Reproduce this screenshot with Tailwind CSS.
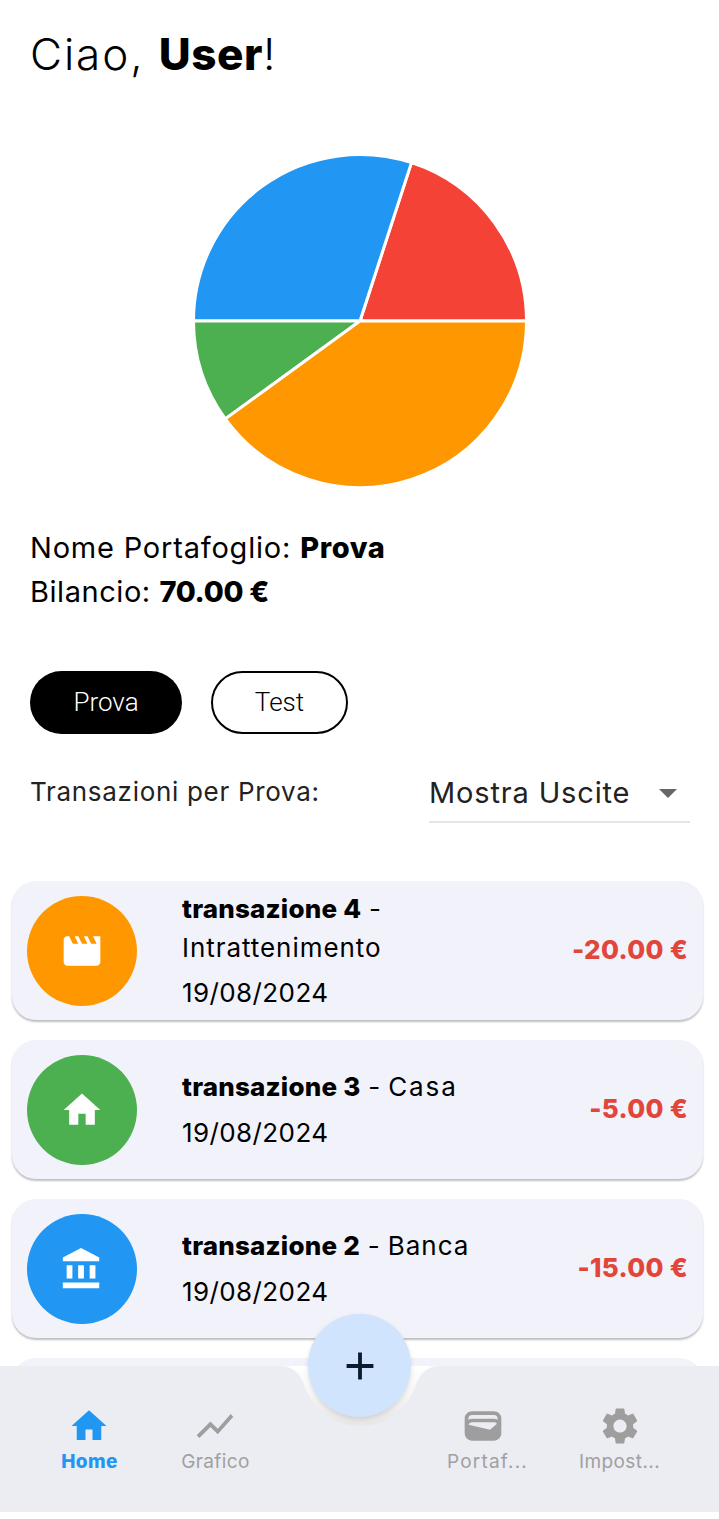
<!DOCTYPE html>
<html lang="en">
<head>
  <meta charset="UTF-8" />
  <title>Ciao, User</title>
  <script src="https://cdn.jsdelivr.net/npm/@tailwindcss/browser@4"></script>
</head>
<body class="bg-white">
  <div class="relative h-[1519px] w-[719px] overflow-hidden bg-white font-['Inter',sans-serif] text-black">
    <div class="px-[30px] pt-[26px]">
      <h1 class="h-[56px] text-[44px] leading-[56px] font-light tracking-[1.9px]">Ciao, <b class="font-extrabold tracking-[0.5px]">User</b>!</h1>
    </div>

    <!-- Pie -->
    <div class="mt-[69px] flex justify-center">
      <svg width="340" height="340" viewBox="-170 -170 340 340">
        <g stroke="#fff" stroke-width="3" stroke-linejoin="round">
          <path fill="#f44336" d="M0 0L166.500 0A166.500 166.500 0 0 0 51.450 -158.350Z" />
          <path fill="#2196f3" d="M0 0L51.450 -158.350A166.500 166.500 0 0 0 -166.500 0Z" />
          <path fill="#4caf50" d="M0 0L-166.500 0A166.500 166.500 0 0 0 -134.700 97.900Z" />
          <path fill="#ff9800" d="M0 0L-134.700 97.900A166.500 166.500 0 0 0 166.500 0Z" />
        </g>
      </svg>
    </div>

    <!-- Wallet info -->
    <div class="mt-[35px] px-[30px] text-[29px] leading-[44px]">
      <p class="tracking-[0.8px]">Nome Portafoglio: <b class="font-extrabold tracking-[0.6px]">Prova</b></p>
      <p class="tracking-[0.55px]">Bilancio: <b class="font-extrabold tracking-[-0.3px]">70.00 €</b></p>
    </div>

    <!-- Wallet chips -->
    <div class="mt-[57px] flex gap-[29px] px-[30px] font-['Roboto',sans-serif] text-[26px] font-light">
      <div class="flex h-[63px] w-[152px] items-center justify-center rounded-full bg-black text-white">Prova</div>
      <div class="flex h-[63px] w-[137px] items-center justify-center rounded-full border-2 border-black">Test</div>
    </div>

    <!-- Filter -->
    <div class="mt-[31px] flex items-start justify-between pl-[30px] pr-[29px]">
      <span class="text-[26px] leading-[54px] tracking-[0.7px] text-[#222]">Transazioni per Prova:</span>
      <div class="flex h-[58px] w-[261px] items-center justify-between border-b-2 border-[#e5e5e5] pr-[13px]">
        <span class="text-[29px] tracking-[0.85px] text-[#222]">Mostra Uscite</span>
        <svg width="18" height="9" viewBox="0 0 20 10"><path fill="#666" d="M0 0h20L10 10z" /></svg>
      </div>
    </div>

    <!-- Transactions -->
    <div class="mt-[58px] flex flex-col gap-[20px] pl-[12px] pr-[16px]">
      <div class="flex h-[139px] items-center rounded-[24px] bg-[#f1f2fa] pl-[15px] pr-[15px] shadow-[0_2px_2px_rgba(0,0,0,0.25)]">
        <div class="flex h-[110px] w-[110px] shrink-0 items-center justify-center rounded-full bg-[#ff9800]">
          <svg width="44" height="44" viewBox="0 0 24 24" fill="#fff"><path d="M18 4l2 4h-3l-2-4h-2l2 4h-3l-2-4H8l2 4H7L5 4H4c-1.100 0-1.990.9-1.990 2L2 18c0 1.100.9 2 2 2h16c1.100 0 2-.9 2-2V4h-4z" /></svg>
        </div>
        <div class="ml-[45px] mb-[1px] text-[26px] leading-[39px] tracking-[0.4px]">
          <p><b class="font-extrabold tracking-[0.2px]">transazione 4</b> -<br /><span class="tracking-[0.95px]">Intrattenimento</span></p>
          <p class="mt-[6px]">19/08/2024</p>
        </div>
        <span class="ml-auto mb-[3px] text-[26px] font-extrabold tracking-[0.3px] text-[#e2453a]">-20.00 €</span>
      </div>

      <div class="flex h-[139px] items-center rounded-[24px] bg-[#f1f2fa] pl-[15px] pr-[15px] shadow-[0_2px_2px_rgba(0,0,0,0.25)]">
        <div class="flex h-[110px] w-[110px] shrink-0 items-center justify-center rounded-full bg-[#4caf50]">
          <svg width="44" height="44" viewBox="0 0 24 24" fill="#fff"><path d="M10 20v-6h4v6h5v-8h3L12 3 2 12h3v8z" /></svg>
        </div>
        <div class="ml-[45px] text-[26px] leading-[40px] tracking-[0.4px]">
          <p><b class="font-extrabold tracking-[0.2px]">transazione 3</b> - <span class="tracking-[1.900px]">Casa</span></p>
          <p class="mt-[6px]">19/08/2024</p>
        </div>
        <span class="ml-auto mb-[3px] text-[26px] font-extrabold tracking-[0.3px] text-[#e2453a]">-5.00 €</span>
      </div>

      <div class="flex h-[139px] items-center rounded-[24px] bg-[#f1f2fa] pl-[15px] pr-[15px] shadow-[0_2px_2px_rgba(0,0,0,0.25)]">
        <div class="flex h-[110px] w-[110px] shrink-0 items-center justify-center rounded-full bg-[#2196f3]">
          <svg width="46" height="46" viewBox="0 0 24 24" fill="#fff"><path d="M4 10v7h3v-7H4zm6 0v7h3v-7h-3zM2 22h19v-3H2v3zm14-12v7h3v-7h-3zm-4.500-9L2 6v2h19V6l-9.500-5z" /></svg>
        </div>
        <div class="ml-[45px] text-[26px] leading-[40px] tracking-[0.4px]">
          <p><b class="font-extrabold tracking-[0.2px]">transazione 2</b> - <span class="tracking-[1px]">Banca</span></p>
          <p class="mt-[6px]">19/08/2024</p>
        </div>
        <span class="ml-auto mb-[3px] text-[26px] font-extrabold tracking-[0.3px] text-[#e2453a]">-15.00 €</span>
      </div>

      <div class="h-[139px] rounded-[24px] bg-[#f1f2fa]"></div>
    </div>

    <!-- Bottom bar -->
    <div class="absolute bottom-[7px] left-0 h-[146px] w-full">
      <svg class="absolute inset-0" width="719" height="146" viewBox="0 0 719 146">
        <defs>
          <linearGradient id="notch" x1="0" y1="0" x2="0" y2="1">
            <stop offset="0" stop-color="#ffffff" />
            <stop offset="0.45" stop-color="#f6f6f6" />
            <stop offset="1" stop-color="#e6e6e6" />
          </linearGradient>
        </defs>
        <path fill="url(#notch)" d="M280 0H440V60H280Z" />
        <path fill="#ecedf3" d="M0 0H280C292 0 298 6 303 16A59 59 0 0 0 417 16C422 6 428 0 440 0H719V146H0Z" />
      </svg>
      <nav class="relative flex h-full text-[19px] tracking-[0.4px] text-[#a0a0a0]">
        <div class="ml-[44px] flex w-[89px] flex-col items-center pt-[38px]">
          <svg width="42" height="44" viewBox="0 0 24 24" fill="#2196f3"><path d="M10 20v-6h4v6h5v-8h3L12 3 2 12h3v8z" /></svg>
          <span class="ml-[2px] font-extrabold text-[#2196f3]">Home</span>
        </div>
        <div class="ml-[37px] flex w-[89px] flex-col items-center pt-[38px]">
          <svg width="44" height="44" viewBox="0 0 24 24" fill="#9e9e9e"><path d="M3.500 18.490l6-6.010 4 4L22 6.920l-1.410-1.410-7.090 7.970-4-4L2 16.990z" /></svg>
          <span class="ml-[2px]">Grafico</span>
        </div>
        <div class="ml-[179px] flex w-[89px] flex-col items-center pt-[38px]">
          <svg width="44" height="44" viewBox="0 0 24 24" fill="#9e9e9e"><path d="M18 4H6C3.790 4 2 5.790 2 8v8c0 2.210 1.790 4 4 4h12c2.210 0 4-1.790 4-4V8c0-2.210-1.790-4-4-4zm-1.860 9.770c-.24.2-.57.28-.88.2L4.150 11.250C4.450 10.520 5.160 10 6 10h12c.67 0 1.260.34 1.630.84l-3.490 2.930zM6 6h12c1.100 0 2 .9 2 2v.55c-.59-.34-1.270-.55-2-.55H6c-.73 0-1.410.21-2 .55V8c0-1.100.9-2 2-2z" /></svg>
          <span class="ml-[10px] tracking-[1.2px]">Portaf...</span>
        </div>
        <div class="ml-[48px] flex w-[89px] flex-col items-center pt-[38px]">
          <svg width="44" height="44" viewBox="0 0 24 24" fill="#9e9e9e"><path d="M19.140 12.940c.04-.3.06-.61.06-.94 0-.32-.02-.64-.07-.94l2.030-1.580c.18-.14.23-.41.12-.61l-1.920-3.320c-.12-.22-.37-.29-.59-.22l-2.390.96c-.5-.38-1.030-.7-1.620-.94l-.36-2.540c-.04-.24-.24-.41-.48-.41h-3.840c-.24 0-.43.17-.47.41l-.36 2.540c-.59.24-1.130.57-1.620.94l-2.390-.96c-.22-.08-.47 0-.59.22L2.740 8.870c-.12.21-.08.47.12.61l2.030 1.580c-.05.3-.09.63-.09.94s.02.64.07.94l-2.030 1.580c-.18.14-.23.41-.12.61l1.920 3.320c.12.22.37.29.59.22l2.390-.96c.5.38 1.030.7 1.620.94l.36 2.540c.05.24.24.41.48.41h3.840c.24 0 .44-.17.47-.41l.36-2.540c.59-.24 1.130-.56 1.620-.94l2.390.96c.22.08.47 0 .59-.22l1.920-3.320c.12-.22.07-.47-.12-.61l-2.010-1.580zM12 15.600c-1.980 0-3.600-1.620-3.600-3.600s1.620-3.600 3.600-3.600 3.600 1.620 3.600 3.600-1.620 3.600-3.600 3.600z" /></svg>
          <span>Impost...</span>
        </div>
      </nav>
    </div>

    <!-- FAB -->
    <button class="absolute left-[308px] top-[1314px] flex h-[103px] w-[103px] items-center justify-center rounded-full bg-[#d0e4fd] shadow-[0_2px_5px_rgba(0,0,0,0.12)]">
      <svg width="46" height="46" viewBox="0 0 24 24" fill="#0d1b2e"><path d="M19 13h-6v6h-2v-6H5v-2h6V5h2v6h6v2z" /></svg>
    </button>
  </div>
</body>
</html>
